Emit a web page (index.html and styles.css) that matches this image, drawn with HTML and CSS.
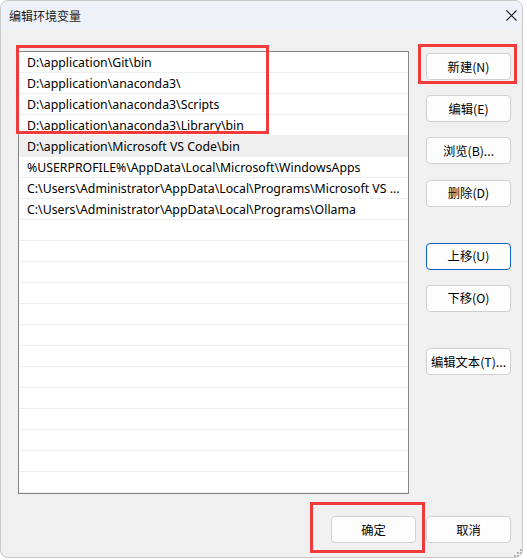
FILE: index.html
```html
<!DOCTYPE html>
<html lang="zh-CN">
<head>
<meta charset="utf-8">
<title>编辑环境变量</title>
<link rel="stylesheet" href="styles.css">
</head>
<body>
<div class="window">
  <div class="titlebar">
    <span class="title">编辑环境变量</span>
    <svg class="close" width="11" height="11" viewBox="0 0 11 11"><path d="M0.5 0.5 L10.5 10.5 M10.5 0.5 L0.5 10.5" stroke="#1b1b1b" stroke-width="1.1" fill="none"/></svg>
  </div>
  <div class="main">
    <div class="list">
      <div class="row">D:\application\Git\bin</div>
      <div class="row">D:\application\anaconda3\</div>
      <div class="row">D:\application\anaconda3\Scripts</div>
      <div class="row">D:\application\anaconda3\Library\bin</div>
      <div class="row selected">D:\application\Microsoft VS Code\bin</div>
      <div class="row">%USERPROFILE%\AppData\Local\Microsoft\WindowsApps</div>
      <div class="row">C:\Users\Administrator\AppData\Local\Programs\Microsoft VS ...</div>
      <div class="row">C:\Users\Administrator\AppData\Local\Programs\Ollama</div>
      <div class="row"></div>
      <div class="row"></div>
      <div class="row"></div>
      <div class="row"></div>
      <div class="row"></div>
      <div class="row"></div>
      <div class="row"></div>
      <div class="row"></div>
      <div class="row"></div>
      <div class="row"></div>
      <div class="row"></div>
      <div class="row"></div>
      <div class="row"></div>
    </div>
    <div class="actions">
      <button class="btn">新建(N)</button>
      <button class="btn">编辑(E)</button>
      <button class="btn">浏览(B)...</button>
      <button class="btn">删除(D)</button>
      <button class="btn focused group">上移(U)</button>
      <button class="btn">下移(O)</button>
      <button class="btn group">编辑文本(T)...</button>
    </div>
  </div>
  <div class="footer">
    <button class="btn">确定</button>
    <button class="btn">取消</button>
  </div>
  <svg class="grip" width="8" height="8" viewBox="0 0 8 8">
    <rect x="6" y="0" width="2" height="2" fill="#b5b5b5"/>
    <rect x="3" y="3" width="2" height="2" fill="#b5b5b5"/>
    <rect x="6" y="3" width="2" height="2" fill="#b5b5b5"/>
    <rect x="0" y="6" width="2" height="2" fill="#b5b5b5"/>
    <rect x="3" y="6" width="2" height="2" fill="#b5b5b5"/>
    <rect x="6" y="6" width="2" height="2" fill="#b5b5b5"/>
  </svg>
</div>
<div class="mark mark-list"></div>
<div class="mark mark-new"></div>
<div class="mark mark-ok"></div>
</body>
</html>
```
FILE: styles.css
```css
html, body {
  margin: 0;
  padding: 0;
  background: #ffffff;
}
body {
  position: relative;
  width: 527px;
  height: 560px;
  font-family: "Noto Sans", "Noto Sans CJK SC", sans-serif;
  font-size: 12px;
  color: #000;
}
.window {
  position: relative;
  box-sizing: border-box;
  width: 523px;
  height: 558px;
  border: 1px solid #c8c8c8;
  border-radius: 8px;
  background: #f0f0f0;
  overflow: hidden;
  display: flex;
  flex-direction: column;
}
.titlebar {
  height: 28px;
  flex: none;
  background: #eef2f8;
  display: flex;
  align-items: center;
  justify-content: space-between;
  padding: 0 5px 1px 8px;
}
.title {
  font-family: "Noto Sans CJK SC", sans-serif;
  font-size: 12px;
  color: #1a1a1a;
}
.close {
  display: block;
}
.main {
  display: flex;
  padding: 21px 0 0 17px;
  gap: 17px;
}
.list {
  box-sizing: border-box;
  width: 391px;
  height: 443px;
  border: 1px solid #868686;
  background: #fff;
  overflow: hidden;
}
.row {
  box-sizing: border-box;
  height: 21px;
  line-height: 20px;
  padding-top: 1px;
  border-bottom: 1px solid #efefef;
  padding-left: 8px;
  white-space: nowrap;
  overflow: hidden;
  font-size: 12.3px;
  color: #000;
}
.row.selected {
  background: #efefef;
}
.actions {
  display: flex;
  flex-direction: column;
  gap: 15.2px;
  padding-top: 2px;
}
.btn {
  box-sizing: border-box;
  width: 85px;
  height: 27px;
  margin: 0;
  padding: 0;
  border: 1px solid #d0d0d0;
  border-radius: 4px;
  background: #fdfdfd;
  font-family: "Noto Sans CJK SC", sans-serif;
  font-size: 12.3px;
  color: #000;
  display: flex;
  align-items: center;
  justify-content: center;
}
.btn.group {
  margin-top: 21px;
}
.btn.focused {
  border: 1.5px solid #0a62c4;
}
.footer {
  display: flex;
  justify-content: flex-end;
  gap: 10px;
  padding: 22px 11px 0 0;
}
.grip {
  position: absolute;
  right: 0;
  bottom: 0;
}
.mark {
  position: absolute;
  box-sizing: border-box;
  border: 3px solid #f03a3c;
}
.mark-list {
  left: 16px;
  top: 45px;
  width: 253px;
  height: 89px;
}
.mark-new {
  left: 418px;
  top: 44px;
  width: 99px;
  height: 40px;
}
.mark-ok {
  left: 310px;
  top: 502px;
  width: 115px;
  height: 51px;
}
```
